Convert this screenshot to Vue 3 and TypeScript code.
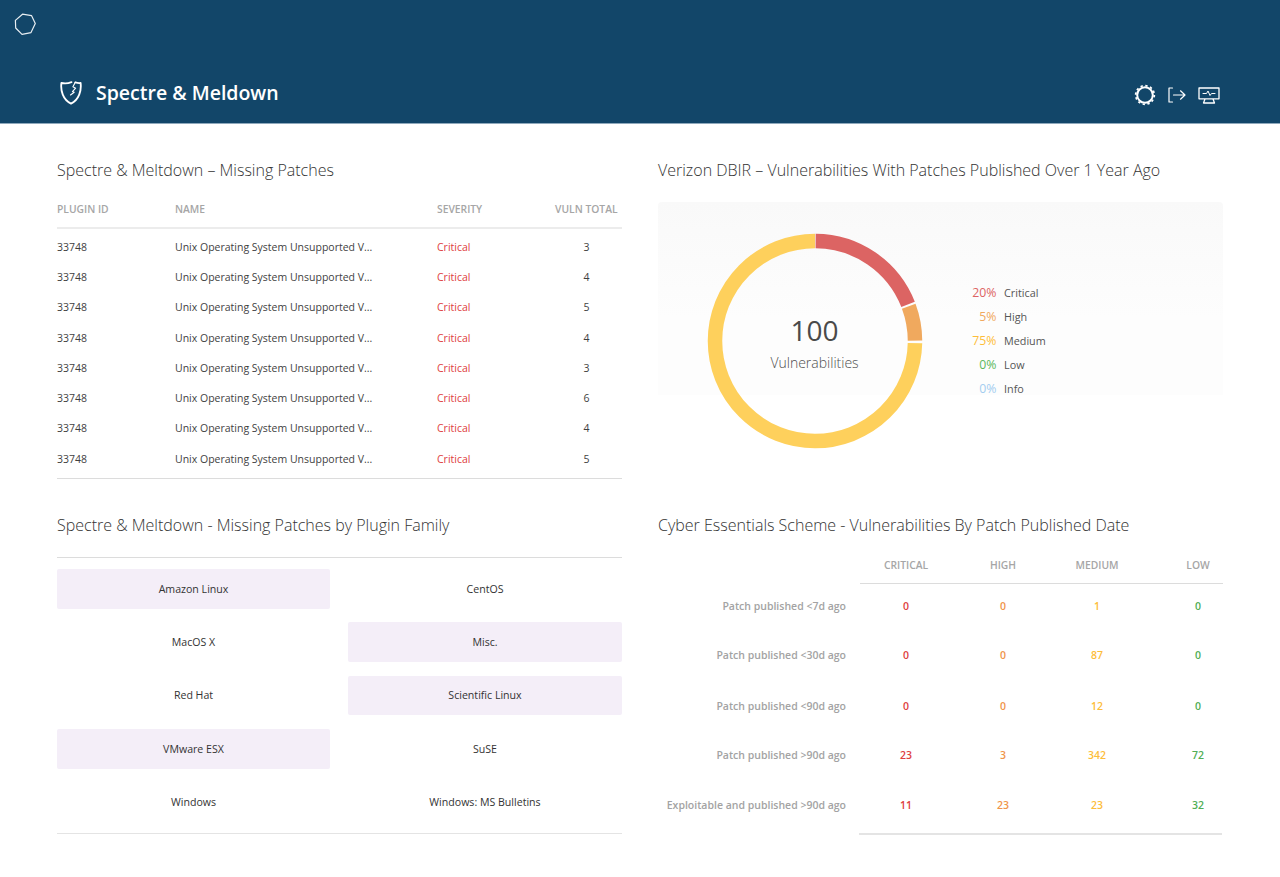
<script setup lang="ts">
const patches = [3, 4, 5, 4, 3, 6, 4, 5]
const families = [
  { n: 'Amazon Linux', on: true }, { n: 'CentOS', on: false },
  { n: 'MacOS X', on: false }, { n: 'Misc.', on: true },
  { n: 'Red Hat', on: false }, { n: 'Scientific Linux', on: true },
  { n: 'VMware ESX', on: true }, { n: 'SuSE', on: false },
  { n: 'Windows', on: false }, { n: 'Windows: MS Bulletins', on: false },
]
const legend = [
  { p: '20%', l: 'Critical', c: 'c-crit' },
  { p: '5%', l: 'High', c: 'c-high' },
  { p: '75%', l: 'Medium', c: 'c-med' },
  { p: '0%', l: 'Low', c: 'c-low' },
  { p: '0%', l: 'Info', c: 'c-info' },
]
const rows = [
  { l: 'Patch published <7d ago', v: [0, 0, 1, 0] },
  { l: 'Patch published <30d ago', v: [0, 0, 87, 0] },
  { l: 'Patch published <90d ago', v: [0, 0, 12, 0] },
  { l: 'Patch published >90d ago', v: [23, 3, 342, 72] },
  { l: 'Exploitable and published >90d ago', v: [11, 23, 23, 32] },
]
const cols = ['CRITICAL', 'HIGH', 'MEDIUM', 'LOW']
const colClass = ['c-crit2', 'c-high2', 'c-med2', 'c-low2']
const R = 100
const C = 2 * Math.PI * R
const arcs = [
  { color: '#dc6463', start: 0.001, end: 0.19 },
  { color: '#f0a95e', start: 0.193, end: 0.249 },
  { color: '#fed05c', start: 0.253, end: 0.999 },
].map(a => ({ color: a.color, dash: `${(a.end - a.start) * C} ${C}`, offset: -a.start * C }))
</script>

<template>
  <div class="page">
    <header class="hdr">
      <svg class="logo" width="24" height="24" viewBox="0 0 24 24" fill="none" stroke="#e8eef2" stroke-width="1.2" stroke-linejoin="round">
        <path d="M9.5 2.2 18.600 3.700 22.300 11.500 18 20.600 9 22.400 2.700 16 2.400 8.400Z" />
      </svg>
      <div class="hdr-row">
        <div class="brand">
          <svg class="shield" width="24" height="24" viewBox="0 1 24 25" fill="none" stroke="#fff" stroke-width="1.900" stroke-linecap="round" stroke-linejoin="round">
            <path d="M12.500 2.200C9 3.600 5 3.800 2 3 1 11 3.500 20.500 12 24.600 20.500 20.500 23 11 22 3 20.500 3.300 18.500 3 16.500 2.400" />
            <path d="M16.500 2.400 14 7 16.800 8.500 13.500 12 15.300 12.800 11.500 15.500" stroke-width="1.200" />
          </svg>
          <span class="brand-name">Spectre &amp; Meldown</span>
        </div>
        <div class="tools">
          <svg width="22" height="22" viewBox="0 0 22 22" fill="none" stroke="#fff">
            <circle cx="11" cy="11" r="7.800" stroke-width="2" />
            <circle cx="11" cy="11" r="9.300" stroke-width="1.800" stroke-dasharray="2.300 2.570" />
          </svg>
          <svg width="18" height="16" viewBox="0 0 18 16" fill="none" stroke="#fff" stroke-width="1.200" stroke-linecap="round" stroke-linejoin="round">
            <path d="M4.500 1H1v14h3.500" />
            <path d="M5.500 8H17M12.500 3.800 17 8l-4.500 4.200" />
          </svg>
          <svg width="22" height="17" viewBox="0 0 22 17" fill="none" stroke="#fff" stroke-width="1.300" stroke-linejoin="round" stroke-linecap="round">
            <path d="M1 1h20v10.800H1zM7 12l-1.500 4h11L15 12" />
            <path d="M5 6.500h3.500l1.500-2.500 2 4.500 1.500-2H17" stroke-width="1" />
          </svg>
        </div>
      </div>
    </header>

    <main class="main">
      <section>
        <h2>Spectre &amp; Meltdown – Missing Patches</h2>
        <div class="patch">
          <div class="patch-row patch-head">
            <span>PLUGIN ID</span><span>NAME</span><span>SEVERITY</span><span>VULN TOTAL</span>
          </div>
          <div class="patch-body">
            <div v-for="(t, i) in patches" :key="i" class="patch-row">
              <span>33748</span>
              <span>Unix Operating System Unsupported V...</span>
              <span class="crit">Critical</span>
              <span class="total">{{ t }}</span>
            </div>
          </div>
        </div>
      </section>

      <section>
        <h2>Verizon DBIR – Vulnerabilities With Patches Published Over 1 Year Ago</h2>
        <div class="chart">
          <div class="donut">
            <svg width="216" height="216" viewBox="0 0 216 216">
              <g transform="rotate(-90 108 108)">
                <circle v-for="a in arcs" :key="a.color" cx="108" cy="108" :r="R" fill="none" :stroke="a.color" stroke-width="14.500" :stroke-dasharray="a.dash" :stroke-dashoffset="a.offset" />
              </g>
            </svg>
            <div class="donut-label">
              <strong>100</strong>
              <span>Vulnerabilities</span>
            </div>
          </div>
          <ul class="legend">
            <li v-for="x in legend" :key="x.l">
              <span class="pct" :class="x.c">{{ x.p }}</span><span class="lbl">{{ x.l }}</span>
            </li>
          </ul>
        </div>
      </section>

      <section>
        <h2>Spectre &amp; Meltdown - Missing Patches by Plugin Family</h2>
        <div class="fam">
          <div v-for="f in families" :key="f.n" class="fam-cell" :class="{ on: f.on }">{{ f.n }}</div>
        </div>
      </section>

      <section>
        <h2>Cyber Essentials Scheme - Vulnerabilities By Patch Published Date</h2>
        <div class="cyber">
          <div class="cy-row cy-head">
            <span></span>
            <div class="cy-cells">
              <span v-for="c in cols" :key="c">{{ c }}</span>
            </div>
          </div>
          <div class="cy-body">
            <div v-for="r in rows" :key="r.l" class="cy-row cy-data">
              <span class="cy-lbl">{{ r.l }}</span>
              <div class="cy-cells">
                <span v-for="(v, i) in r.v" :key="i" :class="colClass[i]">{{ v }}</span>
              </div>
            </div>
          </div>
        </div>
      </section>
    </main>
  </div>
</template>

<style>
html, body { margin: 0; background: #fff; }
</style>

<style scoped>
.page { width: 1280px; height: 877px; overflow: hidden; font-family: "Open Sans", sans-serif; color: #3f3f3f; background: #fff; }
.hdr { height: 124px; box-sizing: border-box; background: #124669; border-bottom: 1px solid #8fa9bc; padding: 12px 60px 0 13px; display: flex; flex-direction: column; }
.logo { display: block; }
.hdr-row { display: flex; justify-content: space-between; align-items: center; margin-top: 37px; padding-left: 46px; height: 40px; }
.brand { display: flex; align-items: center; gap: 13px; }
.brand-name { color: #fff; font-size: 19.500px; font-weight: 600; line-height: 28px; }
.tools { display: flex; align-items: center; gap: 12px; padding-top: 4px; }
.main { display: grid; grid-template-columns: 565px 565px; column-gap: 36px; row-gap: 36px; grid-template-rows: 319px 320px; padding: 35px 0 0 57px; }
h2 { margin: 0; font-size: 16px; font-weight: 300; line-height: 22px; color: #333; }
.patch { margin-top: 17px; }
.patch-row { display: grid; grid-template-columns: 118px 262px 118px 67px; align-items: center; font-size: 10.500px; color: #3f3f3f; height: 30.250px; }
.patch-head { font-size: 10.300px; font-weight: 600; color: #a6a6a6; border-bottom: 2px solid #ececec; box-sizing: content-box; padding-bottom: 8px; height: 21px; }
.patch-body { padding-top: 2.700px; box-sizing: content-box; border-bottom: 1px solid #dcdcdc; height: 246.300px; }
.crit { color: #de4040; }
.total { padding-right: 4px; text-align: center; }
.chart { margin-top: 21px; display: flex; align-items: flex-start; height: 276px; padding-top: 31px; box-sizing: border-box; background: linear-gradient(#f9f9f9, #fdfdfd 60%) top / 100% 193px no-repeat; border-radius: 4px; }
.donut { position: relative; width: 216px; height: 216px; margin-left: 48.500px; }
.donut svg { display: block; }
.donut-label { position: absolute; inset: 0; display: flex; flex-direction: column; align-items: center; padding-top: 78px; box-sizing: border-box; }
.donut-label strong { font-size: 28px; font-weight: 400; line-height: 38px; color: #4a4a4a; }
.donut-label span { font-size: 14px; font-weight: 300; line-height: 24px; margin-top: 2px; color: #4f4f4f; }
.legend { list-style: none; margin: 47px 0 0 0; padding: 0; }
.legend li { display: flex; align-items: center; height: 24px; }
.pct { width: 74px; text-align: right; font-size: 12.300px; margin-right: 7.500px; }
.lbl { font-size: 10.800px; color: #555; }
.c-crit { color: #dc6463; }
.c-high { color: #f0a95e; }
.c-med { color: #fdbd3a; }
.c-low { color: #5cb85c; }
.c-info { color: #a3cdf0; }
.fam { margin-top: 21px; border-top: 1px solid #dcdcdc; border-bottom: 1px solid #e4e4e4; padding: 11px 0 10.600px; display: grid; grid-template-columns: 273px 274px; column-gap: 18px; grid-auto-rows: 39.800px; row-gap: 13.500px; }
.fam-cell { display: flex; align-items: center; justify-content: center; font-size: 10.600px; color: #333; border-radius: 2px; }
.fam-cell.on { background: #f4eef8; }
.cyber { margin-top: 17px; }
.cy-row { display: grid; grid-template-columns: 188px 363px; column-gap: 14px; align-items: center; font-size: 11px; }
.cy-head { height: 30px; }
.cy-head .cy-cells { height: 31px; box-sizing: border-box; padding-bottom: 7px; border-bottom: 1px solid #dcdcdc; font-size: 10.300px; font-weight: 600; color: #a6a6a6; }
.cy-cells { display: grid; grid-template-columns: 92px 102px 86px 82px; align-items: center; text-align: center; font-weight: 600; font-size: 10.500px; }
.cy-cells > :last-child { padding-left: 34px; }
.cy-body { position: relative; display: flex; flex-direction: column; margin-top: -2px; height: 252px; }
.cy-data { height: 49px; }
.cy-data:nth-child(3) { height: 53px; }
.cy-data:nth-child(4) { height: 45px; }
.cy-data:nth-child(5) { height: 55px; }
.cy-lbl { text-align: right; font-weight: 600; color: #a3a3a3; font-size: 10.500px; }
.cy-body::after { content: ""; position: absolute; left: 201px; width: 363px; bottom: -2px; border-bottom: 2px solid #e4e4e4; }
.c-crit2 { color: #de4040; }
.c-high2 { color: #f0954a; }
.c-med2 { color: #fdbd3a; }
.c-low2 { color: #4fae54; }
</style>
